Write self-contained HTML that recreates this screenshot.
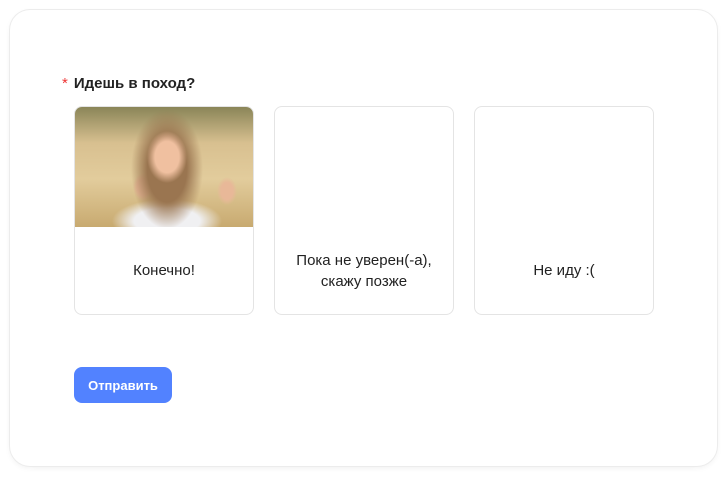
<!DOCTYPE html>
<html><head><meta charset="utf-8"><style>
body{margin:0;background:#fff;width:727px;height:478px;font-family:"Liberation Sans",sans-serif;position:relative;overflow:hidden}
.card{position:absolute;left:10px;top:10px;width:707px;height:456px;border-radius:20px;background:#fff;box-shadow:0 0 0 1px #ececec,0 2px 6px rgba(0,0,0,.06)}
.q{position:absolute;left:62px;top:75px;font-size:15px;color:#222;font-weight:bold}
.q span{color:#e33;margin-right:6px;font-weight:normal}
.opt{position:absolute;top:106px;width:178px;height:207px;border:1px solid #e4e4e4;border-radius:8px;overflow:hidden;background:#fff}
.opt .t{position:absolute;left:0;right:0;top:120px;bottom:0;display:flex;align-items:center;justify-content:center;text-align:center;font-size:15px;color:#222;line-height:21px}
.img{position:absolute;left:0;top:0;width:178px;height:120px;background:
radial-gradient(ellipse 20px 26px at 92px 50px,#f0c0a0 60%,transparent 100%),
radial-gradient(ellipse 36px 60px at 92px 62px,#9a7550 55%,transparent 100%),
radial-gradient(ellipse 55px 22px at 92px 114px,#f0f0f2 60%,transparent 100%),
radial-gradient(ellipse 10px 14px at 68px 80px,#e8b898 60%,transparent),
radial-gradient(ellipse 10px 14px at 152px 84px,#e8b898 60%,transparent),
linear-gradient(180deg,#8a8558 0%,#d8c090 30%,#e2cc9c 60%,#c8aa70 100%)}
.btn{position:absolute;left:74px;top:367px;width:98px;height:36px;border-radius:8px;background:#5282ff;color:#fff;font-size:13px;font-weight:bold;display:flex;align-items:center;justify-content:center}
</style></head><body>
<div class="card"></div>
<div class="q"><span>*</span>Идешь в поход?</div>
<div class="opt" style="left:74px"><div class="img"></div><div class="t">Конечно!</div></div>
<div class="opt" style="left:274px"><div class="t">Пока не уверен(-а),<br>скажу позже</div></div>
<div class="opt" style="left:474px"><div class="t">Не иду :(</div></div>
<div class="btn">Отправить</div>
</body></html>
